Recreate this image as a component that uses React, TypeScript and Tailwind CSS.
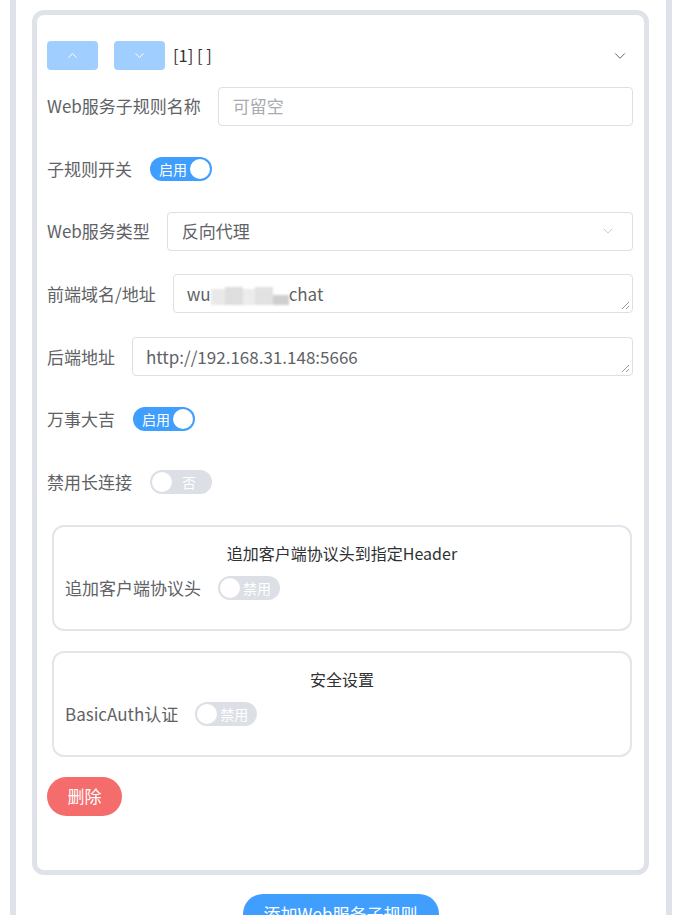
import { ChevronDown, ChevronUp } from "lucide-react";

function Toggle({ on, text }: { on: boolean; text: string }) {
  if (on) {
    return (
      <div className="flex h-[24px] w-[62px] items-center rounded-full bg-[#409eff] pl-[6px] pr-[2px]">
        <span className="flex-1 text-center text-[14px] leading-none text-white">{text}</span>
        <span className="h-[20px] w-[20px] rounded-full bg-white" />
      </div>
    );
  }
  return (
    <div className="flex h-[24px] w-[62px] items-center rounded-full bg-[#dcdfe6] pl-[2px] pr-[6px]">
      <span className="h-[20px] w-[20px] rounded-full bg-white" />
      <span className="flex-1 text-center text-[14px] leading-none text-white">{text}</span>
    </div>
  );
}

function Grip() {
  return (
    <svg className="absolute bottom-[2px] right-[2px]" width="9" height="9" viewBox="0 0 9 9">
      <path d="M8 1 L1 8 M8 5 L5 8" stroke="#9a9a9a" strokeWidth="1" />
    </svg>
  );
}

function Row({ label, children }: { label: string; children: React.ReactNode }) {
  return (
    <div className="flex h-[40px] items-center">
      <span className="mr-[17px] shrink-0 text-[17px] text-[#606266]">{label}</span>
      {children}
    </div>
  );
}

function Group({ title, label, text }: { title: string; label: string; text: string }) {
  return (
    <div className="ml-[5px] mr-[1px] h-[106px] rounded-[12px] border-2 border-[#e2e5ea] px-[11px] pt-[15px]">
      <div className="text-center text-[16px] leading-[22px] text-[#303133]">{title}</div>
      <div className="mt-[12px] flex h-[24px] items-center">
        <span className="mr-[17px] text-[17px] text-[#606266]">{label}</span>
        <Toggle on={false} text={text} />
      </div>
    </div>
  );
}

export default function App() {
  return (
    <div
      className="h-[915px] overflow-hidden bg-white"
      style={{ fontFamily: '"Noto Sans CJK SC", "Noto Sans", sans-serif' }}
    >
      <div className="ml-[10px] h-full w-[662px] border-x-[6px] border-[#dfe2e8] pl-[16px] pr-[17px] pt-[10px]">
        <div className="rounded-[12px] border-[5px] border-[#dfe2e8] pb-[54px] pl-[10px] pr-[11px] pt-[26px]">
          {/* header */}
          <div className="flex h-[29px] items-center">
            <button className="flex h-[29px] w-[51px] items-center justify-center rounded-[4px] bg-[#a0cfff]">
              <ChevronUp className="h-[15px] w-[15px] text-white" strokeWidth={1.5} />
            </button>
            <button className="ml-[16px] flex h-[29px] w-[51px] items-center justify-center rounded-[4px] bg-[#a0cfff]">
              <ChevronDown className="h-[15px] w-[15px] text-white" strokeWidth={1.5} />
            </button>
            <span className="ml-[8px] text-[16.5px] text-[#303133]">[1] [ ]</span>
            <ChevronDown className="ml-auto mr-[4px] h-[18px] w-[18px] text-[#606266]" strokeWidth={1.3} />
          </div>

          <div className="mt-[16px] flex flex-col gap-[22.6px]">
            <Row label="Web服务子规则名称">
              <div className="flex h-[39px] flex-1 items-center rounded-[4px] border border-[#dcdfe6] px-[14px] text-[17px] text-[#a8abb2]">
                可留空
              </div>
            </Row>
            <Row label="子规则开关">
              <div className="ml-[1px]">
                <Toggle on text="启用" />
              </div>
            </Row>
            <Row label="Web服务类型">
              <div className="flex h-[39px] flex-1 items-center justify-between rounded-[4px] border border-[#dcdfe6] pl-[14px] pr-[16px] text-[17px] text-[#606266]">
                <span>反向代理</span>
                <ChevronDown className="h-[16px] w-[16px] text-[#c0c4cc]" strokeWidth={1.3} />
              </div>
            </Row>
            <Row label="前端域名/地址">
              <div className="relative flex h-[39px] flex-1 items-center rounded-[4px] border border-[#dcdfe6] px-[13px] text-[17px] text-[#606266]">
                <span>wu</span>
                <span className="flex h-[22px] w-[78px] items-end blur-[1px]">
                  <span className="h-[16px] w-[14px] bg-[#e9e9e9]" />
                  <span className="h-[18px] w-[18px] bg-[#dedede]" />
                  <span className="h-[16px] w-[12px] bg-[#ececec]" />
                  <span className="h-[18px] w-[18px] bg-[#e2e2e2]" />
                  <span className="h-[10px] w-[16px] bg-[#cfcfcf]" />
                </span>
                <span>chat</span>
                <Grip />
              </div>
            </Row>
            <Row label="后端地址">
              <div className="relative flex h-[39px] flex-1 items-center rounded-[4px] border border-[#dcdfe6] px-[13px] text-[17px] text-[#606266]">
                http://192.168.31.148:5666
                <Grip />
              </div>
            </Row>
            <Row label="万事大吉">
              <div className="ml-[1px]">
                <Toggle on text="启用" />
              </div>
            </Row>
            <Row label="禁用长连接">
              <div className="ml-[1px]">
                <Toggle on={false} text="否" />
              </div>
            </Row>
          </div>

          <div className="mt-[23px] flex flex-col gap-[20px]">
            <Group title="追加客户端协议头到指定Header" label="追加客户端协议头" text="禁用" />
            <Group title="安全设置" label="BasicAuth认证" text="禁用" />
          </div>

          <button className="mt-[20px] h-[39px] w-[75px] rounded-full bg-[#f56c6c] text-[17px] text-white">
            删除
          </button>
        </div>

        <div className="mt-[19px] flex justify-center">
          <button className="h-[40px] w-[196px] rounded-full bg-[#409eff] text-[17px] text-white">
            添加Web服务子规则
          </button>
        </div>
      </div>
    </div>
  );
}
